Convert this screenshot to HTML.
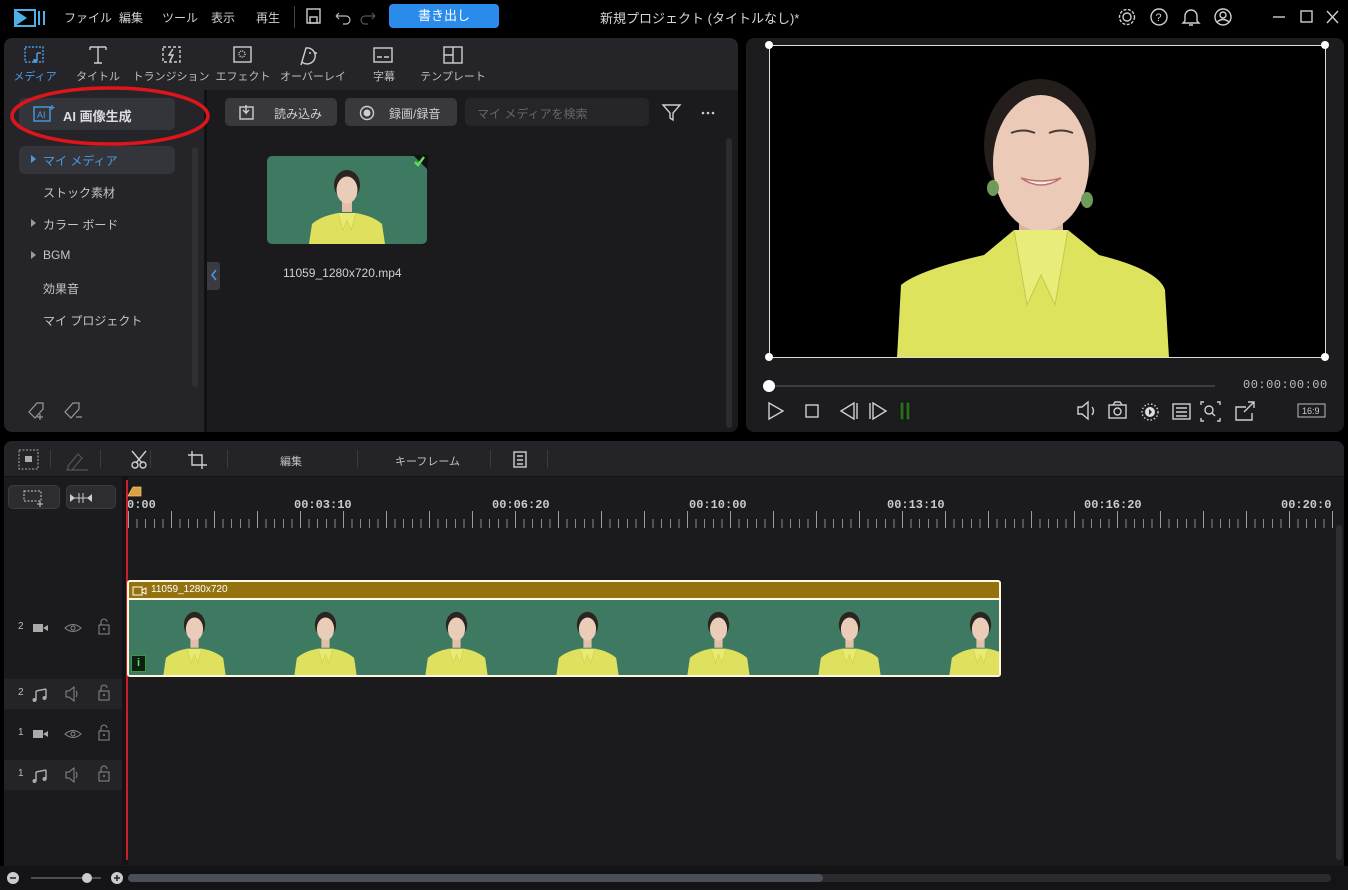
<!DOCTYPE html>
<html><head><meta charset="utf-8">
<style>
*{box-sizing:border-box;margin:0;padding:0}
body{width:1348px;height:890px;background:#000;position:relative;overflow:hidden;font-family:"Liberation Sans","Noto Sans CJK JP",sans-serif;color:#c8c8cc;font-size:12px}
.a{position:absolute}
.menu span{position:absolute;top:9px;font-size:12px;color:#d0d0d4}
.ico{stroke:#cfcfd3;fill:none;stroke-width:1.4}
.tab{position:absolute;top:68px;font-size:11px;color:#bdbdc2;text-align:center;width:80px}
.side{position:absolute;left:43px;font-size:12px;color:#c4c4c8}
.tri{position:absolute;left:31px;width:0;height:0;border-left:5px solid #9a9aa0;border-top:4px solid transparent;border-bottom:4px solid transparent}
.btn{position:absolute;background:#38383d;border-radius:5px}
.tl{position:absolute;font-size:11px;color:#c0c0c4}
.rl{position:absolute;top:498px;font-size:12px;font-weight:bold;color:#c9cbd3;font-family:"Liberation Mono",monospace}
.trk{position:absolute;left:4px;width:118px;height:30px}
.trk span{position:absolute;left:14px;top:8px;font-size:10px;color:#bbb}
</style></head><body>
<svg width="0" height="0" style="position:absolute"><defs>
<symbol id="p" viewBox="0 0 160 88" preserveAspectRatio="none">
<rect width="160" height="88" fill="#3e7a62"/>
<ellipse cx="80" cy="29" rx="13" ry="15" fill="#2b2420"/>
<rect x="75" y="42" width="10" height="14" fill="#e2c0a8"/>
<ellipse cx="80" cy="34" rx="10.5" ry="13.5" fill="#eacdb8"/>
<path d="M42 88 L45 68 Q54 60 71 57 L80 64 L89 57 Q106 60 115 68 L118 88Z" fill="#dfe15e"/>
<path d="M71 57 L76 74 L80 64 L84 74 L89 57" fill="#e8ea72" stroke="#c9c94d" stroke-width=".6"/>
</symbol></defs></svg>

<!-- top bar -->
<svg class="a" style="left:14px;top:8px" width="34" height="20"><path d="M1 2 L13 10 L1 18Z" fill="#4fb0e8"/><rect x="1" y="2" width="20" height="16" fill="none" stroke="#4fb0e8" stroke-width="2"/><rect x="24" y="3" width="2" height="14" fill="#4fb0e8"/><rect x="29" y="3" width="2" height="14" fill="#4fb0e8"/></svg>
<div class="menu"><span style="left:64px">ファイル</span><span style="left:119px">編集</span><span style="left:162px">ツール</span><span style="left:211px">表示</span><span style="left:256px">再生</span></div>
<div class="a" style="left:294px;top:6px;width:1px;height:22px;background:#444"></div>
<svg class="a" style="left:306px;top:8px" width="50" height="18"><rect x="1" y="1" width="13" height="14" class="ico"/><rect x="4" y="9" width="7" height="6" class="ico"/><path d="M30 8 h10 a4 4 0 0 1 0 8 h-3 M30 8 l3-3 M30 8 l3 3" stroke="#bbb" fill="none" stroke-width="1.2"/></svg>
<svg class="a" style="left:360px;top:8px" width="18" height="18"><path d="M15 8 h-10 a4 4 0 0 0 0 8 h3 M15 8 l-3-3 M15 8 l-3 3" stroke="#555" fill="none" stroke-width="1.2"/></svg>
<div class="a" style="left:389px;top:4px;width:110px;height:24px;background:#2a8bea;border-radius:4px;color:#fff;font-size:13px;text-align:center;line-height:24px">書き出し</div>
<div class="a" style="left:600px;top:8px;font-size:13px;color:#d6d6da">新規プロジェクト (タイトルなし)*</div>
<svg class="a" style="left:1116px;top:6px" width="230" height="24">
<circle cx="11" cy="11" r="4" class="ico"/><circle cx="11" cy="11" r="7.5" class="ico" stroke-dasharray="3 1.5"/>
<circle cx="43" cy="11" r="8" class="ico"/><text x="39.5" y="15" font-size="11" fill="#cfcfd3" font-family="Liberation Sans">?</text>
<path d="M69 15 v-5 a6 6 0 0 1 12 0 v5 l2 2 h-16 l2-2 M73 19 h4" class="ico"/>
<circle cx="107" cy="11" r="8" class="ico"/><circle cx="107" cy="9" r="3" class="ico"/><path d="M101 16 q6-5 12 0" class="ico"/>
<path d="M157 11 h12" class="ico"/><rect x="185" y="5" width="11" height="11" class="ico"/><path d="M211 5 l11 12 M222 5 l-11 12" class="ico"/>
</svg>

<!-- library panel -->
<div class="a" style="left:4px;top:38px;width:734px;height:394px;background:#252529;border-radius:8px"></div>
<div class="a" style="left:207px;top:90px;width:531px;height:342px;background:#1b1b1e;border-radius:0 0 8px 0"></div>
<div class="a" style="left:204px;top:90px;width:3px;height:342px;background:#111"></div>
<svg class="a" style="left:20px;top:44px" width="470" height="24">
<rect x="5" y="3" width="18" height="15" fill="none" stroke="#4a9be0" stroke-width="1.5" stroke-dasharray="2 1.5"/><path d="M17 9 v8 M17 9 h4" stroke="#4a9be0" stroke-width="1.5"/><circle cx="15" cy="17" r="2" fill="#4a9be0"/>
<path d="M70 3 h16 M78 3 v16 M74 19 h8 M70 3 v3 M86 3 v3" class="ico"/>
<rect x="143" y="3" width="17" height="15" class="ico" stroke-dasharray="3 2"/><path d="M153 5 l-4 6 h4 l-3 6" class="ico"/>
<rect x="214" y="3" width="17" height="15" class="ico"/><circle cx="222" cy="10" r="3" class="ico" stroke-dasharray="1 1"/>
<path d="M286 4 a8 8 0 1 1 -4 14 l-1 3 z" class="ico"/><circle cx="290" cy="9" r="1" fill="#ccc"/><circle cx="296" cy="9" r="1" fill="#ccc"/>
<rect x="354" y="4" width="18" height="14" class="ico"/><path d="M357 13 h5 M364 13 h5" class="ico"/>
<rect x="424" y="3" width="18" height="16" class="ico"/><path d="M433 3 v16 M424 11 h9" class="ico"/>
</svg>
<div class="tab" style="left:-5px;color:#4a9be0">メディア</div>
<div class="tab" style="left:58px">タイトル</div>
<div class="tab" style="left:131px">トランジション</div>
<div class="tab" style="left:203px">エフェクト</div>
<div class="tab" style="left:273px">オーバーレイ</div>
<div class="tab" style="left:344px">字幕</div>
<div class="tab" style="left:413px">テンプレート</div>

<div class="btn" style="left:19px;top:98px;width:156px;height:32px;background:#34353b"></div>
<svg class="a" style="left:32px;top:104px" width="24" height="20"><rect x="2" y="3" width="16" height="14" fill="none" stroke="#4a9be0" stroke-width="1.4"/><text x="5" y="14" font-size="9" fill="#4a9be0" font-family="Liberation Sans">AI</text><path d="M20 1 v5 M17.5 3.5 h5" stroke="#4a9be0" stroke-width="1.2"/></svg>
<div class="a" style="left:63px;top:106px;font-size:13px;font-weight:bold;color:#dcdce0">AI 画像生成</div>
<svg class="a" style="left:8px;top:86px" width="206" height="64"><ellipse cx="102" cy="30" rx="98" ry="28" fill="none" stroke="#e0141b" stroke-width="3.5"/></svg>

<div class="a" style="left:19px;top:146px;width:156px;height:28px;background:#34353b;border-radius:6px"></div>
<div class="tri" style="left:31px;top:155px;border-left-color:#4a9be0"></div>
<div class="side" style="top:152px;color:#4a9be0">マイ メディア</div>
<div class="side" style="top:184px">ストック素材</div>
<div class="tri" style="top:219px"></div><div class="side" style="top:216px">カラー ボード</div>
<div class="tri" style="top:251px"></div><div class="side" style="top:248px">BGM</div>
<div class="side" style="top:280px">効果音</div>
<div class="side" style="top:312px">マイ プロジェクト</div>
<div class="a" style="left:192px;top:147px;width:6px;height:240px;background:#303035;border-radius:3px"></div>
<svg class="a" style="left:26px;top:398px" width="64" height="24"><path d="M3 14 l8-9 h6 v6 l-8 9z M14 16 v6 M11 19 h6" stroke="#999" fill="none" stroke-width="1.2"/><path d="M39 14 l8-9 h6 v6 l-8 9z M50 19 h6" stroke="#999" fill="none" stroke-width="1.2"/></svg>

<div class="btn" style="left:225px;top:98px;width:112px;height:28px"></div>
<svg class="a" style="left:238px;top:104px" width="18" height="18"><rect x="2" y="3" width="13" height="12" class="ico"/><path d="M8 1 v8 l-3-3 M8 9 l3-3" class="ico"/></svg>
<div class="a" style="left:274px;top:105px;font-size:12px;color:#cfcfd3">読み込み</div>
<div class="btn" style="left:345px;top:98px;width:112px;height:28px"></div>
<svg class="a" style="left:358px;top:104px" width="18" height="18"><circle cx="9" cy="9" r="6.5" class="ico"/><circle cx="9" cy="9" r="3.5" fill="#cfcfd3"/></svg>
<div class="a" style="left:389px;top:105px;font-size:12px;color:#cfcfd3">録画/録音</div>
<div class="a" style="left:465px;top:98px;width:184px;height:28px;background:#26262a;border-radius:5px"></div>
<div class="a" style="left:477px;top:105px;font-size:12px;color:#66666b">マイ メディアを検索</div>
<svg class="a" style="left:660px;top:102px" width="60" height="20"><path d="M3 3 h17 l-7 8 v7 l-3-2 v-5z" class="ico"/><circle cx="43" cy="11" r="1.3" fill="#ccc"/><circle cx="48" cy="11" r="1.3" fill="#ccc"/><circle cx="53" cy="11" r="1.3" fill="#ccc"/></svg>
<div class="a" style="left:726px;top:138px;width:6px;height:290px;background:#2b2b30;border-radius:3px"></div>
<svg class="a" style="left:267px;top:156px;border-radius:5px" width="160" height="88"><use href="#p"/></svg>
<svg class="a" style="left:410px;top:155px" width="18" height="16"><path d="M3 0 h15 v15z" fill="#111"/><path d="M5 7 l3 3 l6-8" stroke="#5ee05a" stroke-width="2.4" fill="none"/></svg>
<div class="a" style="left:283px;top:266px;font-size:12px;color:#d0d0d4">11059_1280x720.mp4</div>
<div class="a" style="left:207px;top:262px;width:13px;height:28px;background:#3a3a40;border-radius:0 3px 3px 0"></div>
<svg class="a" style="left:208px;top:268px" width="12" height="14"><path d="M8 2 l-4 5 l4 5" stroke="#4a9be0" stroke-width="1.5" fill="none"/></svg>

<!-- preview -->
<div class="a" style="left:746px;top:38px;width:598px;height:394px;background:#1c1c1f;border-radius:8px"></div>
<svg class="a" style="left:769px;top:45px" width="557" height="313">
<rect width="557" height="313" fill="#000"/>
<ellipse cx="271" cy="100" rx="56" ry="66" fill="#231d1b"/>
<rect x="250" y="160" width="44" height="45" fill="#dcb49c"/>
<ellipse cx="272" cy="118" rx="48" ry="68" fill="#ebcbb7"/>
<ellipse cx="224" cy="143" rx="6" ry="8" fill="#6e9a5a"/><ellipse cx="318" cy="155" rx="6" ry="8" fill="#6e9a5a"/>
<path d="M242 88 q12-5 24 0 M280 88 q12-5 24 0" stroke="#4b3a33" stroke-width="2" fill="none"/>
<path d="M252 133 q20 14 40 0 q-20 6 -40 0" fill="#f5f0ea" stroke="#c07070" stroke-width="1.5"/>
<path d="M128 313 L132 240 Q150 225 215 210 L245 185 L272 230 L299 185 L330 210 Q390 225 396 245 L400 313Z" fill="#dee35e"/>
<path d="M245 185 L258 260 L272 230 L286 260 L299 185" fill="#e8ec78" stroke="#c3c84c" stroke-width="1"/>
<rect x="0.5" y="0.5" width="556" height="312" fill="none" stroke="#ddd" stroke-width="1"/>
</svg>
<div class="a" style="left:765px;top:41px;width:8px;height:8px;background:#fff;border-radius:4px"></div>
<div class="a" style="left:1321px;top:41px;width:8px;height:8px;background:#fff;border-radius:4px"></div>
<div class="a" style="left:765px;top:353px;width:8px;height:8px;background:#fff;border-radius:4px"></div>
<div class="a" style="left:1321px;top:353px;width:8px;height:8px;background:#fff;border-radius:4px"></div>
<div class="a" style="left:769px;top:385px;width:446px;height:2px;background:#3c3c42"></div>
<div class="a" style="left:763px;top:380px;width:12px;height:12px;background:#fff;border-radius:6px"></div>
<div class="a" style="left:1243px;top:378px;font-size:12px;color:#bdbdc2;font-family:'Liberation Mono',monospace;letter-spacing:0.5px">00:00:00:00</div>
<svg class="a" style="left:760px;top:398px" width="580" height="26">
<path d="M9 5 l14 8 l-14 8z" class="ico"/><rect x="46" y="7" width="12" height="12" class="ico"/>
<path d="M94 5 l-13 8 l13 8z M97 5 v16" class="ico"/><path d="M110 5 v16 M113 5 l13 8 l-13 8z" class="ico"/>
<rect x="140" y="4" width="4" height="18" fill="#2a6b1e" stroke="#111"/><rect x="146" y="4" width="4" height="18" fill="#2a6b1e" stroke="#111"/>
<path d="M318 9 h4 l6-5 v17 l-6-5 h-4z M332 9 q3 4 0 8" class="ico"/>
<rect x="349" y="7" width="17" height="13" class="ico"/><circle cx="357.5" cy="13.5" r="3.5" class="ico"/><path d="M353 7 l2-3 h5 l2 3" class="ico"/>
<circle cx="390" cy="14" r="8" class="ico" stroke-dasharray="1.5 2"/><circle cx="390" cy="14" r="5" fill="#ddd"/><path d="M389 11 l3 3 l-3 3z" fill="#222"/>
<rect x="413" y="6" width="17" height="15" class="ico"/><path d="M416 10 h11 M416 14 h11 M416 18 h11" class="ico"/>
<path d="M444 4 h-3 v3 M457 4 h3 v3 M444 23 h-3 v-3 M457 23 h3 v-3" class="ico"/><circle cx="449" cy="12" r="4" class="ico"/><path d="M452 15 l3 3" class="ico"/>
<path d="M486 9 h-10 v13 h16 v-7 M484 14 l10-10 M488 4 h6 v6" class="ico"/>
<rect x="538" y="6" width="27" height="13" fill="none" stroke="#bbb" stroke-width="1"/><text x="542" y="16" font-size="9" fill="#ccc" font-family="Liberation Sans">16:9</text>
</svg>

<!-- timeline -->
<div class="a" style="left:4px;top:441px;width:1340px;height:425px;background:#1b1b1e;border-radius:8px 8px 0 0"></div>
<div class="a" style="left:4px;top:441px;width:1340px;height:36px;background:#242428;border-radius:8px 8px 0 0;border-bottom:1px solid #111"></div>
<svg class="a" style="left:14px;top:447px" width="540" height="26">
<rect x="5" y="3" width="19" height="19" fill="none" stroke="#aaa" stroke-dasharray="2 1.5"/><rect x="11" y="9" width="7" height="6" fill="#aaa"/>
<path d="M54 19 l10-12 l4 4 l-10 12 h-4z M52 23 h22" stroke="#555" fill="none" stroke-width="1.2"/>
<circle cx="121" cy="18" r="3" class="ico"/><circle cx="129" cy="18" r="3" class="ico"/><path d="M118 4 l10 12 M132 4 l-10 12" class="ico"/>
<path d="M178 4 v14 h15 M174 8 h14 v14" class="ico"/>
<rect x="500" y="5" width="12" height="15" class="ico"/><path d="M503 9 h6 M503 13 h6 M503 17 h6" class="ico"/>
</svg>
<div class="a" style="left:50px;top:450px;width:1px;height:18px;background:#3a3a3f"></div>
<div class="a" style="left:100px;top:450px;width:1px;height:18px;background:#3a3a3f"></div>
<div class="a" style="left:150px;top:450px;width:1px;height:18px;background:#3a3a3f"></div>
<div class="a" style="left:227px;top:450px;width:1px;height:18px;background:#3a3a3f"></div>
<div class="a" style="left:357px;top:450px;width:1px;height:18px;background:#3a3a3f"></div>
<div class="a" style="left:490px;top:450px;width:1px;height:18px;background:#3a3a3f"></div>
<div class="a" style="left:547px;top:450px;width:1px;height:18px;background:#3a3a3f"></div>
<div class="tl" style="left:280px;top:453px">編集</div>
<div class="tl" style="left:395px;top:453px">キーフレーム</div>

<div class="btn" style="left:8px;top:485px;width:52px;height:24px;background:#2c2c31;border:1px solid #3a3a40"></div>
<div class="btn" style="left:66px;top:485px;width:50px;height:24px;background:#2c2c31;border:1px solid #3a3a40"></div>
<svg class="a" style="left:20px;top:488px" width="90" height="20"><rect x="4" y="3" width="17" height="10" fill="none" stroke="#ccc" stroke-dasharray="2 1.5"/><path d="M20 13 v6 M17 16 h6" stroke="#ccc"/><path d="M50 10 h22 M59 5 v10 M63 5 v10" stroke="#ccc"/><path d="M50 6 l5 4 l-5 4z M72 6 l-5 4 l5 4z" fill="#ccc"/></svg>

<div class="a" style="left:122px;top:477px;width:6px;height:388px;background:#141416"></div>
<div class="a" style="left:128px;top:519px;width:1208px;height:9px;background:repeating-linear-gradient(90deg,#8a8a90 0 1px,transparent 1px 8.6px)"></div>
<div class="a" style="left:128px;top:511px;width:1208px;height:17px;background:repeating-linear-gradient(90deg,#9a9aa0 0 1px,transparent 1px 43px)"></div>
<div class="rl" style="left:127px">0:00</div>
<div class="rl" style="left:294px">00:03:10</div>
<div class="rl" style="left:492px">00:06:20</div>
<div class="rl" style="left:689px">00:10:00</div>
<div class="rl" style="left:887px">00:13:10</div>
<div class="rl" style="left:1084px">00:16:20</div>
<div class="rl" style="left:1281px">00:20:0</div>
<div class="a" style="left:126px;top:480px;width:2px;height:380px;background:#c8202a"></div>
<svg class="a" style="left:127px;top:485px" width="16" height="12"><path d="M1 11 l5-9 h8 v9z" fill="#d9a044" stroke="#f0c070" stroke-width=".8"/></svg>

<!-- clip -->
<div class="a" style="left:127px;top:580px;width:874px;height:97px;border:2px solid #fff8e0;border-radius:3px;background:#94720f;overflow:hidden">
<div class="a" style="left:22px;top:2px;font-size:10px;color:#fff">11059_1280x720</div>
<svg class="a" style="left:3px;top:4px" width="16" height="10"><rect x="1" y="1" width="9" height="8" fill="none" stroke="#fff"/><path d="M10 4 l4-2 v6 l-4-2" fill="none" stroke="#fff"/></svg>
<div class="a" style="left:0;top:16px;width:872px;height:2px;background:#fff8e0"></div>
<svg class="a" style="left:0;top:18px" width="872" height="75" preserveAspectRatio="none">
<use href="#p" x="0" width="131" height="75"/><use href="#p" x="131" width="131" height="75"/><use href="#p" x="262" width="131" height="75"/><use href="#p" x="393" width="131" height="75"/><use href="#p" x="524" width="131" height="75"/><use href="#p" x="655" width="131" height="75"/><use href="#p" x="786" width="131" height="75"/>
</svg>
<div class="a" style="left:2px;top:73px;width:15px;height:17px;background:#0d1f10;border:1px solid #3a9a40;color:#5ee05a;font-size:11px;font-weight:bold;text-align:center;line-height:15px">i</div>
</div>

<!-- track headers -->
<div class="trk" style="top:613px"><span>2</span></div>
<div class="trk" style="top:679px;background:#242428"><span>2</span></div>
<div class="trk" style="top:719px"><span>1</span></div>
<div class="trk" style="top:760px;background:#242428"><span>1</span></div>
<svg class="a" style="left:30px;top:615px" width="90" height="175">
<g id="v"><rect x="3" y="9" width="10" height="8" fill="#aaa"/><path d="M13 13 l5-3 v6z" fill="#aaa"/>
<path d="M35 13 q8-7 16 0 q-8 7 -16 0z" fill="none" stroke="#888"/><circle cx="43" cy="13" r="2" fill="none" stroke="#888"/>
<rect x="69" y="10" width="10" height="9" fill="none" stroke="#888"/><path d="M71 10 v-3 a3 3 0 0 1 6 0" fill="none" stroke="#888"/><circle cx="74" cy="14" r="1" fill="#888"/></g>
<use href="#v" y="106"/>
<g id="m" transform="translate(0,66)"><path d="M6 10 v9 M16 8 v9 M6 10 l10-2" stroke="#aaa" fill="none" stroke-width="1.5"/><circle cx="4.5" cy="19" r="2" fill="#aaa"/><circle cx="14.5" cy="17" r="2" fill="#aaa"/>
<path d="M36 10 h3 l5-4 v14 l-5-4 h-3z M46 10 q2 3 0 6" fill="none" stroke="#888"/>
<rect x="69" y="10" width="10" height="9" fill="none" stroke="#888"/><path d="M71 10 v-3 a3 3 0 0 1 6 0" fill="none" stroke="#888"/><circle cx="74" cy="14" r="1" fill="#888"/></g>
<use href="#m" y="81"/>
</svg>
<div class="a" style="left:1336px;top:525px;width:6px;height:335px;background:#2e2e33;border-radius:3px"></div>

<!-- bottom -->
<div class="a" style="left:0;top:866px;width:1348px;height:24px;background:#141416"></div>
<svg class="a" style="left:6px;top:871px" width="120" height="15"><circle cx="7" cy="7" r="6" fill="#ccc"/><path d="M4 7 h6" stroke="#222" stroke-width="1.5"/><path d="M25 7 h70" stroke="#888"/><circle cx="81" cy="7" r="5" fill="#ccc"/><circle cx="111" cy="7" r="6" fill="#ccc"/><path d="M108 7 h6 M111 4 v6" stroke="#222" stroke-width="1.5"/></svg>
<div class="a" style="left:128px;top:874px;width:1203px;height:8px;background:#2a2a2f;border-radius:4px"></div>
<div class="a" style="left:128px;top:874px;width:695px;height:8px;background:#4b4d58;border-radius:4px"></div>
</body></html>
